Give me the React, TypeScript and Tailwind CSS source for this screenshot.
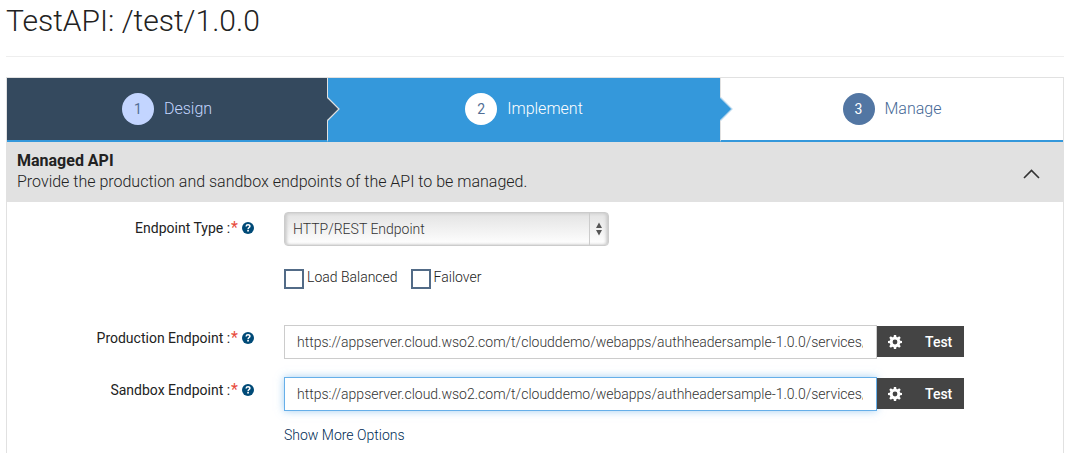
import { useState } from "react";
import type { ReactNode } from "react";

const ENDPOINT = "https://appserver.cloud.wso2.com/t/clouddemo/webapps/authheadersample-1.0.0/services/";

function Arrow({ fill, edge }: { fill: string; edge: string }) {
  return (
    <svg className="absolute top-[19px] left-full z-10" width="14" height="24" viewBox="0 0 14 24" aria-hidden="true">
      <path d="M0 0.5 L12 12 L0 23.5 Z" fill={fill} />
      <path d="M0.5 0.5 L12 12 L0.5 23.5" fill="none" stroke={edge} strokeWidth="1.2" />
    </svg>
  );
}

function HelpIcon() {
  return (
    <svg className="ml-1 size-3" viewBox="0 0 12 12" fill="none" aria-hidden="true">
      <circle cx="6" cy="6" r="6" fill="#004a77" />
      <path d="M4.1 4.5C4.2 3.3 5 2.8 6 2.8C7.1 2.8 7.9 3.4 7.9 4.3C7.9 5.5 6.1 5.6 6.1 7.2" stroke="#fff" strokeWidth="1.5" />
      <path d="M5.2 8H6.9V9.6H5.2Z" fill="#fff" />
    </svg>
  );
}

const TEETH = [0, 45, 90, 135];

function GearIcon() {
  return (
    <svg className="size-[14px]" viewBox="0 0 14 14" aria-hidden="true">
      {TEETH.map((angle) => (
        <path key={angle} d="M5.9 0H8.1L8.6 3V11L8.1 14H5.9L5.4 11V3Z" fill="#fff" transform={`rotate(${angle} 7 7)`} />
      ))}
      <circle cx="7" cy="7" r="5.3" fill="#fff" />
      <circle cx="7" cy="7" r="2.4" fill="#444" />
    </svg>
  );
}

function Step({ n, label, box, badge, children }: { n: number; label: string; box: string; badge: string; children?: ReactNode }) {
  return (
    <li className={`relative flex border-b-2 border-[#3498db] ${box}`}>
      <a href={`#step-${n}`} className="flex h-[62px] flex-1 items-center justify-center gap-[10px] text-base">
        <span className={`flex size-8 items-center justify-center rounded-full text-sm font-normal ${badge}`}>{n}</span>
        {label}
      </a>
      {children}
    </li>
  );
}

function FieldLabel({ htmlFor, children }: { htmlFor: string; children: ReactNode }) {
  return (
    <label htmlFor={htmlFor} className="flex h-[26px] items-center justify-end text-sm font-normal text-[#222]">
      {children} :<span className="ml-px text-base leading-5 text-[#e74c3c]">*</span>
      <HelpIcon />
    </label>
  );
}

function EndpointField({ id, label, focused }: { id: string; label: string; focused?: boolean }) {
  const [value, setValue] = useState(ENDPOINT);
  return (
    <>
      <FieldLabel htmlFor={id}>{label}</FieldLabel>
      <div className="flex items-start">
        <input
          id={id}
          type="text"
          value={value}
          onChange={(e) => setValue(e.target.value)}
          className={`h-[34px] w-[593px] min-w-0 border bg-white pr-[13px] pl-3 text-sm text-[#333] outline-none ${
            focused ? "border-[#66afe9] shadow-[0_0_8px_rgba(102,175,233,0.6)]" : "border-[#ccc]"
          }`}
        />
        <button type="button" className="mt-px flex h-[31px] shrink-0 items-center bg-[#444] pr-3 pl-[11px] text-sm font-medium text-white">
          <GearIcon />
          <span className="ml-[23px]">Test</span>
        </button>
      </div>
    </>
  );
}

export default function App() {
  const [type, setType] = useState("http");
  return (
    <main className="pr-[10px] pl-[6px] font-['Roboto',sans-serif] font-light text-[#222]">
      <h1 className="border-b border-[#eee] pt-1 pb-[19px] text-[30px] leading-[33px] font-light">TestAPI: /test/1.0.0</h1>

      <section className="mt-5 border border-b-0 border-[#e1e1e1] pb-2">
        <ol className="grid grid-cols-[321fr_393fr_342fr]">
          <Step n={1} label="Design" box="border-r border-r-[#e1e1e1] bg-[#34495e] text-[#c3d5ff]" badge="bg-[#c3d5ff] text-[#526f96]">
            <Arrow fill="#34495e" edge="#e1e1e1" />
          </Step>
          <Step n={2} label="Implement" box="border-r border-r-[#e1e1e1] bg-[#3498db] text-white" badge="bg-white text-[#526f96]">
            <Arrow fill="#3498db" edge="#b8d8ee" />
          </Step>
          <Step n={3} label="Manage" box="bg-white text-[#456896]" badge="bg-[#5276a3] text-white" />
        </ol>

        <header className="flex h-[60px] items-start justify-between bg-[#e1e1e1] pt-2 pr-[23px] pl-[10px]">
          <div className="text-base leading-[21px]">
            <h2 className="font-bold">Managed API</h2>
            <p>Provide the production and sandbox endpoints of the API to be managed.</p>
          </div>
          <button type="button" aria-label="Collapse section" className="mt-[19px]">
            <svg width="17" height="10" viewBox="0 0 17 10" fill="none" stroke="#333" strokeWidth="1.6" aria-hidden="true">
              <path d="M1 9 L8.5 1.5 L16 9" />
            </svg>
          </button>
        </header>

        <form className="grid grid-cols-[247px_1fr] gap-x-[30px] pt-[10px]" onSubmit={(e) => e.preventDefault()}>
          <div className="pt-[3px]">
            <FieldLabel htmlFor="type">Endpoint Type</FieldLabel>
          </div>
          <div className="relative h-[34px] w-[325px] max-w-full">
            <select
              id="type"
              value={type}
              onChange={(e) => setType(e.target.value)}
              className="h-full w-full appearance-none rounded border border-[#ccc] bg-linear-to-b from-[#e3e3e3] to-white px-2 text-sm text-[#333] shadow-[inset_2px_0_3px_#ccc,inset_-2px_0_3px_#ccc]"
            >
              <option value="http">HTTP/REST Endpoint</option>
              <option value="soap">WSDL/SOAP Endpoint</option>
            </select>
            <svg className="pointer-events-none absolute top-0 right-0" width="20" height="34" viewBox="0 0 20 34" aria-hidden="true">
              <path d="M0.5 1V33" stroke="#ccc" />
              <path d="M10 10.5L13 16H7ZM10 23.5L7 18H13Z" fill="#555" />
            </svg>
          </div>

          <div className="col-start-2 mt-[23px] mb-9 flex gap-[13px] text-sm leading-[17px]">
            <label className="flex gap-[3px]">
              <input type="checkbox" className="size-5 appearance-none border-2 border-[#526b87] checked:bg-[#526b87]" />
              Load Balanced
            </label>
            <label className="flex gap-[3px]">
              <input type="checkbox" className="size-5 appearance-none border-2 border-[#526b87] checked:bg-[#526b87]" />
              Failover
            </label>
          </div>

          <EndpointField id="production" label="Production Endpoint" />
          <div className="col-span-2 h-[18px]" />
          <EndpointField id="sandbox" label="Sandbox Endpoint" focused />

          <a href="#more" className="col-start-2 mt-[14px] justify-self-start text-sm leading-5 text-[#002b55]">
            Show More Options
          </a>
        </form>
      </section>
    </main>
  );
}
